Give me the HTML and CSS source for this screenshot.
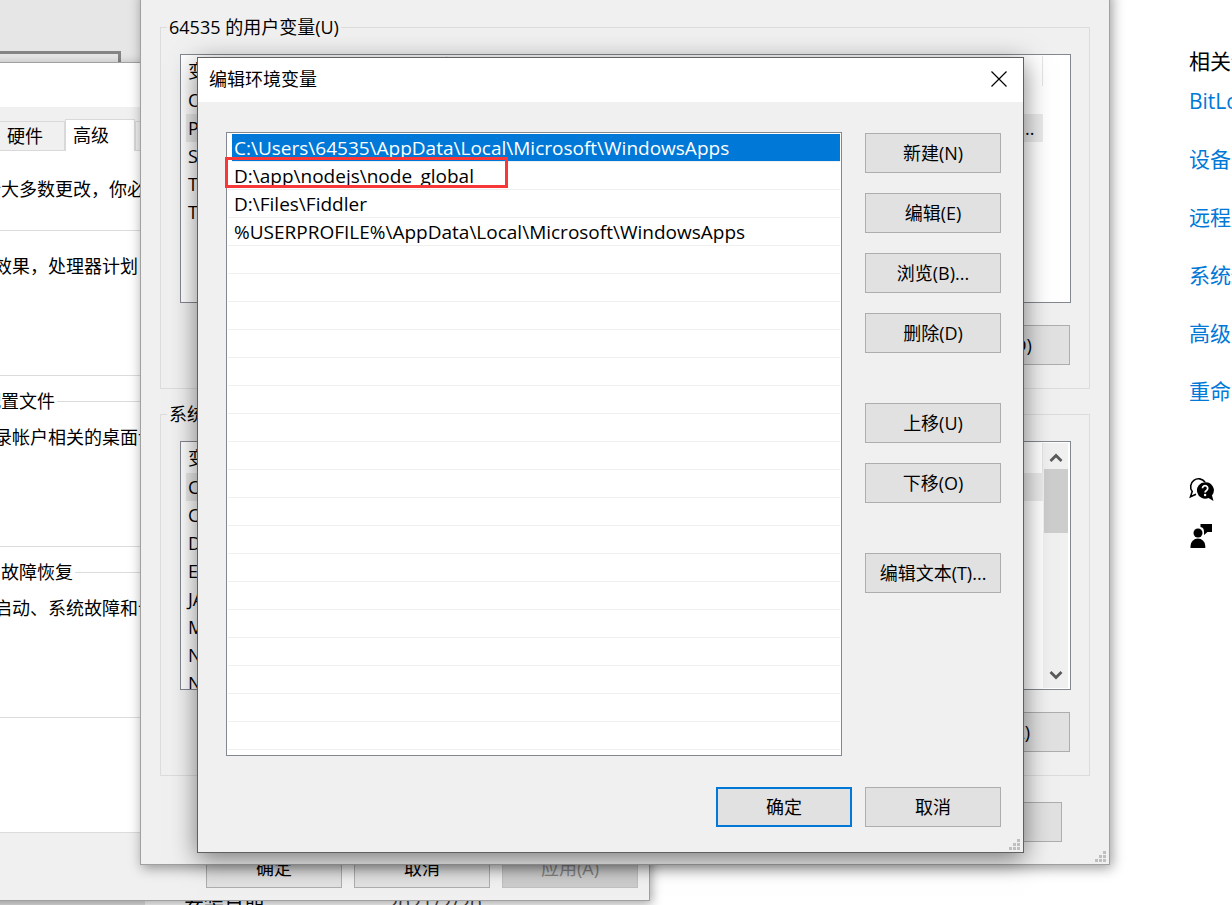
FILE: index.html
```html
<!DOCTYPE html>
<html lang="zh-CN">
<head>
<meta charset="utf-8">
<title>编辑环境变量</title>
<link rel="stylesheet" href="styles.css">
</head>
<body>
<div class="settings">
  <nav class="settings-nav"><div class="nav-search"></div></nav>
  <main class="settings-main">
    <dl class="spec"><dt>安装日期</dt><dd>2021/2/20</dd></dl>
  </main>
  <aside class="related">
    <h2>相关设置</h2>
    <a href="#">BitLocker 设置</a>
    <a href="#">设备管理器</a>
    <a href="#">远程桌面</a>
    <a href="#">系统保护</a>
    <a href="#">高级系统设置</a>
    <a href="#">重命名这台电脑</a>
    <div class="help">
      <svg width="26" height="26" viewBox="0 0 26 26" aria-hidden="true">
        <path d="M7 17.300 L1.500 19.800 L3.200 14.500 A7.400 7.400 0 1 1 16 5" fill="none" stroke="#000" stroke-width="1.600"/>
        <path d="M16 5.200a8.200 8.200 0 1 0 3.500 15.700L24.500 24l-1.500-5.500A8.200 8.200 0 0 0 16 5.200z" fill="#000"/>
        <path d="M13.500 11.200a2.600 2.600 0 1 1 4 2.200c-1 .6-1.400 1-1.400 2.200" fill="none" stroke="#fff" stroke-width="1.800"/>
        <circle cx="16.100" cy="18" r="1.200" fill="#fff"/>
      </svg>
      <svg width="26" height="26" viewBox="0 0 26 26" aria-hidden="true">
        <circle cx="9" cy="10" r="4.500" fill="#000"/>
        <path d="M1.500 25v-2a7.300 7.300 0 0 1 14.800 0v2z" fill="#000"/>
        <path d="M11.500 1h11.500v8h-4.500l-3.500 3v-3c0-3-1-4.500-3.500-5z" fill="#000"/>
      </svg>
    </div>
  </aside>
</div>

<section class="window system" aria-label="系统属性">
  <div class="titlebar"></div>
  <div class="tabs">
    <button type="button" class="tab">硬件</button>
    <button type="button" class="tab active">高级</button>
    <button type="button" class="tab">系统保护</button>
  </div>
  <div class="tab-page">
    <p class="intro">要进行大多数更改，你必须作为管理员登录。</p>
    <fieldset><legend>性能</legend><p>视觉效果，处理器计划，内存使用，以及虚拟内存</p></fieldset>
    <fieldset><legend>用户配置文件</legend><p>与登录帐户相关的桌面设置</p></fieldset>
    <fieldset><legend>启动和故障恢复</legend><p>系统启动、系统故障和调试信息</p></fieldset>
  </div>
  <div class="footer">
    <button type="button">确定</button>
    <button type="button">取消</button>
    <button type="button" disabled>应用(A)</button>
  </div>
</section>

<section class="window variables" aria-label="环境变量">
  <fieldset>
    <legend>64535 的用户变量(U)</legend>
    <div class="listview">
      <table>
        <thead><tr><th class="name">变量</th><th>值</th></tr></thead>
        <tbody>
          <tr><td>OneDrive</td><td></td></tr>
          <tr class="selected"><td>Path</td><td class="cut">...</td></tr>
          <tr><td>SYS</td><td></td></tr>
          <tr><td>TEMP</td><td></td></tr>
          <tr><td>TMP</td><td></td></tr>
        </tbody>
      </table>
    </div>
    <div class="group-actions"><button type="button">删除(D)</button></div>
  </fieldset>
  <fieldset>
    <legend>系统变量(S)</legend>
    <div class="listview">
      <table>
        <thead><tr><th class="name">变量</th><th>值</th></tr></thead>
        <tbody>
          <tr class="selected"><td>CLASSPATH</td><td></td></tr>
          <tr><td>ComSpec</td><td></td></tr>
          <tr><td>DriverData</td><td></td></tr>
          <tr><td>ES_HOME</td><td></td></tr>
          <tr><td>JAVA_HOME</td><td></td></tr>
          <tr><td>MAVEN</td><td></td></tr>
          <tr><td>NODE</td><td></td></tr>
          <tr><td>NUMBER</td><td></td></tr>
        </tbody>
      </table>
      <div class="scrollbar">
        <svg width="14" height="10" viewBox="0 0 14 10" aria-hidden="true"><path d="M1.500 8 7 2.500 12.500 8" fill="none" stroke="#5a5a5a" stroke-width="2.800"/></svg>
        <div class="thumb"></div>
        <svg width="14" height="10" viewBox="0 0 14 10" aria-hidden="true"><path d="M1.500 2 7 7.500 12.500 2" fill="none" stroke="#5a5a5a" stroke-width="2.800"/></svg>
      </div>
    </div>
    <div class="group-actions"><button type="button">删除(L)</button></div>
  </fieldset>
  <div class="footer"><button type="button">取消</button></div>
  <svg class="grip" width="11" height="11" viewBox="0 0 11 11" aria-hidden="true"><path d="M8 0h3v3h-3zM4 4h3v3h-3zM8 4h3v3h-3zM0 8h3v3h-3zM4 8h3v3h-3zM8 8h3v3h-3z" fill="#bfbfbf"/></svg>
</section>

<section class="window editor" role="dialog" aria-labelledby="editor-title">
  <header class="titlebar">
    <h1 id="editor-title">编辑环境变量</h1>
    <button type="button" class="close" aria-label="关闭"><svg width="16" height="16" viewBox="0 0 16 16" aria-hidden="true"><path d="M.500.500l15 15M15.500.500l-15 15" stroke="#000" stroke-width="1.200"/></svg></button>
  </header>
  <div class="editor-body">
    <ul class="paths">
      <li class="selected">C:\Users\64535\AppData\Local\Microsoft\WindowsApps</li>
      <li>D:\app\nodejs\node_global</li>
      <li>D:\Files\Fiddler</li>
      <li>%USERPROFILE%\AppData\Local\Microsoft\WindowsApps</li>
      <li></li><li></li><li></li><li></li><li></li><li></li><li></li><li></li><li></li>
      <li></li><li></li><li></li><li></li><li></li><li></li><li></li><li></li><li></li>
    </ul>
    <div class="actions">
      <button type="button">新建(N)</button>
      <button type="button">编辑(E)</button>
      <button type="button">浏览(B)...</button>
      <button type="button">删除(D)</button>
      <button type="button" class="spaced">上移(U)</button>
      <button type="button">下移(O)</button>
      <button type="button" class="spaced">编辑文本(T)...</button>
    </div>
    <div class="highlight"></div>
  </div>
  <div class="footer">
    <button type="button" class="default">确定</button>
    <button type="button">取消</button>
  </div>
  <svg class="grip" width="11" height="11" viewBox="0 0 11 11" aria-hidden="true"><path d="M8 0h3v3h-3zM4 4h3v3h-3zM8 4h3v3h-3zM0 8h3v3h-3zM4 8h3v3h-3zM8 8h3v3h-3z" fill="#bfbfbf"/></svg>
</section>
</body>
</html>
```

FILE: styles.css
```css
* { box-sizing: border-box; }

body {
  position: relative;
  height: 100vh;
  margin: 0;
  overflow: hidden;
  background: #fff;
  color: #000;
  font: 370 18px/24px "Open Sans", "Noto Sans CJK SC", sans-serif;
}

h1, h2, p, ul, dl, dd { margin: 0; padding: 0; font-weight: inherit; }

button {
  width: 136px;
  height: 40px;
  padding: 0;
  border: 1px solid #adadad;
  background: #e1e1e1;
  color: #000;
  font: inherit;
}

button:disabled { border-color: #bfbfbf; background: #ccc; color: #838383; }
button.default { border: 2px solid #0078d7; }

/* Settings page behind the windows */
.settings { display: flex; height: 100vh; overflow: hidden; }
.settings-nav { flex: 0 0 145px; padding-top: 51px; background: #e6e6e6; }
.nav-search { width: 121px; height: 40px; border: 3px solid #858585; border-left: 0; }
.settings-main { flex: 1; padding: 890px 0 0 39px; font-size: 20px; line-height: 28px; }
.spec { display: flex; }
.spec dt { width: 203px; }
.spec dd { color: #444; }

.related {
  display: flex;
  flex: 0 0 43px;
  flex-direction: column;
  gap: 30px;
  padding-top: 47px;
  overflow: hidden;
  font-size: 21px;
  line-height: 28px;
  white-space: nowrap;
}

.related h2 { margin-bottom: -18px; font-size: 21px; }
.related a { color: #0078d7; text-decoration: none; }
.help { display: flex; flex-direction: column; gap: 20px; padding-top: 42px; }

/* Windows */
.window { position: absolute; border: 1px solid #a0a0a0; background: #f0f0f0; }

fieldset { min-width: 0; margin: 0; border: 1px solid #dcdcdc; }
legend { height: 24px; padding: 0 2px; }
.footer { display: flex; justify-content: flex-end; gap: 13px; }
.grip { position: absolute; right: 3px; bottom: 2px; }

.system {
  top: 62px;
  left: -80px;
  width: 730px;
  height: 839px;
  box-shadow: 2px 3px 10px rgba(0, 0, 0, .35);
}

.system .titlebar { height: 44px; background: #fff; }
.tabs { display: flex; align-items: flex-end; height: 44px; padding-left: 78px; }

.tab {
  width: 66px;
  height: 30px;
  padding-left: 7px;
  border-color: #d9d9d9;
  background: #f0f0f0;
  text-align: left;
}

.tab.active { width: 70px; height: 32px; padding-bottom: 2px; border-bottom: 0; background: #fff; }
.tab:last-child { width: 100px; padding-left: 4px; }
.tab-page { height: 682px; padding: 26px 18px 0; border-bottom: 1px solid #dcdcdc; background: #fff; }
.intro { margin-bottom: 17px; padding-left: 8px; }
.tab-page fieldset { height: 158px; margin-bottom: 13px; padding: 12px 18px; }
.tab-page legend { margin-left: -13px; }
.system .footer { gap: 12px; padding: 15px 11px 0; }

.variables {
  top: -10px;
  left: 140px;
  width: 970px;
  height: 875px;
  padding: 24px 19px 0;
  box-shadow: 2px 3px 12px rgba(0, 0, 0, .4);
}

.variables fieldset { height: 374px; margin-bottom: 13px; padding: 15px 18px 0 19px; }
.variables legend { margin-left: -13px; }

.listview {
  display: flex;
  height: 249px;
  padding: 1px 2px 1px 5px;
  overflow: hidden;
  border: 1px solid #828790;
  background: #fff;
}

table { flex: 1; height: max-content; border-collapse: collapse; table-layout: fixed; }
.listview > table:only-child { margin-right: 25px; }
th { height: 30px; padding: 0; border-right: 1px solid #e5e5e5; font-weight: inherit; text-align: left; }
th.name { width: 260px; }
td { height: 28px; padding: 0; }
th:first-child, td:first-child { padding-left: 2px; }
tr.selected { background: #ebebeb; }
td.cut { padding-right: 8px; text-align: right; }

.scrollbar {
  display: flex;
  flex: 0 0 25px;
  flex-direction: column;
  align-items: center;
  padding: 10px 0 8px;
  background: #f0f0f0;
}

.thumb { width: 24px; height: 64px; margin: 6px 0 auto; background: #cdcdcd; }
.group-actions { display: flex; justify-content: flex-end; padding: 22px 1px 0 0; }
.variables .footer { padding: 13px 28px 0 0; }

.editor {
  top: 57px;
  left: 197px;
  width: 827px;
  height: 796px;
  border-color: #606060;
  box-shadow: 0 6px 24px rgba(0, 0, 0, .5);
}

.editor .titlebar {
  display: flex;
  align-items: center;
  justify-content: space-between;
  height: 44px;
  padding: 0 16px 2px 11px;
  background: #fff;
}

h1 { font-size: 18px; }
.close { display: flex; width: 16px; height: 16px; border: 0; background: none; }

.editor-body { position: relative; display: flex; gap: 23px; padding: 30px 22px 31px 28px; }

.paths {
  flex: 1;
  height: 624px;
  padding: 1px;
  border: 1px solid #828790;
  background: #fff;
  font-size: 19px;
  list-style: none;
}

.paths li { height: 28px; padding: 0 6px; border-bottom: 1px solid #efefef; line-height: 28px; white-space: nowrap; }
.paths .selected { margin-left: 4px; padding-left: 2px; background: #0078d7; color: #fff; }

.actions { display: flex; flex-direction: column; gap: 20px; padding-top: 1px; }
.actions .spaced { margin-top: 30px; }

/* Red frame drawn over the second entry */
.highlight {
  position: absolute;
  top: 55px;
  left: 27px;
  width: 283px;
  height: 31px;
  border: 3px solid #f83838;
}

.editor .footer { padding-right: 22px; }
```
